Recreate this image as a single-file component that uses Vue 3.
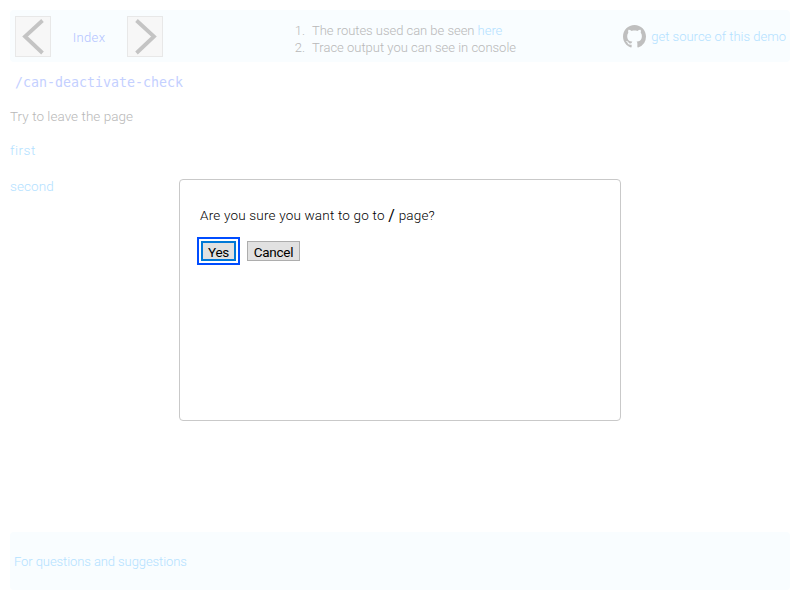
<script setup>
const notes = [
  { text: 'The routes used can be seen', link: 'here' },
  { text: 'Trace output you can see in console' }
]
const links = ['first', 'second']
</script>

<template>
  <div class="page">
    <header class="bar header">
      <nav class="nav">
        <button class="arrow" aria-label="Back">
          <svg width="34" height="39" viewBox="0 0 34 39"><path d="M26.5 3.5L9 19.5L26.5 36" /></svg>
        </button>
        <a class="index">Index</a>
        <button class="arrow" aria-label="Forward">
          <svg width="34" height="39" viewBox="0 0 34 39"><path d="M8.5 3.5L26 19.5L8.5 36" /></svg>
        </button>
      </nav>
      <ol class="notes">
        <li v-for="(note, i) in notes" :key="i">
          <span class="number">{{ i + 1 }}.</span>
          <span :class="{ linked: note.link }">{{ note.text }} <a v-if="note.link" class="link">{{ note.link }}</a></span>
        </li>
      </ol>
      <a class="source link">
        <svg class="github" width="23" height="23" viewBox="0 0 16 16"><path d="M8 0C3.58 0 0 3.58 0 8c0 3.54 2.29 6.53 5.47 7.59.4.07.55-.17.55-.38 0-.19-.01-.82-.01-1.49-2.01.37-2.53-.49-2.69-.94-.09-.23-.48-.94-.82-1.13-.28-.15-.68-.52-.01-.53.63-.01 1.08.58 1.23.82.72 1.21 1.87.87 2.33.66.07-.52.28-.87.51-1.07-1.78-.2-3.64-.89-3.64-3.95 0-.87.31-1.59.82-2.15-.08-.2-.36-1.02.08-2.12 0 0 .67-.21 2.2.82.64-.18 1.32-.27 2-.27s1.36.09 2 .27c1.53-1.04 2.2-.82 2.2-.82.44 1.1.16 1.92.08 2.12.51.56.82 1.27.82 2.15 0 3.07-1.87 3.75-3.65 3.95.29.25.54.73.54 1.48 0 1.07-.01 1.93-.01 2.2 0 .21.15.46.55.38A8.01 8.01 0 0 0 16 8c0-4.42-3.58-8-8-8z" /></svg>
        <span>get source of this demo</span>
      </a>
    </header>
    <main class="content">
      <div class="route">/can-deactivate-check</div>
      <p class="hint">Try to leave the page</p>
      <a v-for="link in links" :key="link" class="link entry" :class="link">{{ link }}</a>
    </main>
    <footer class="bar footer"><a class="link">For questions and suggestions</a></footer>
    <div class="overlay">
      <section class="dialog" role="dialog">
        <p class="question"><span>Are you sure you want to go to</span><b>/</b><span>page?</span></p>
        <div class="actions">
          <button class="action yes">Yes</button>
          <button class="action cancel">Cancel</button>
        </div>
      </section>
    </div>
  </div>
</template>

<style>
body { background: #fff; }
</style>

<style scoped>
* { box-sizing: border-box; }
.page {
  height: 600px;
  padding: 10px;
  display: flex;
  flex-direction: column;
  font: 300 14px/17px Roboto, sans-serif;
  color: #b8b8b8;
  white-space: nowrap;
}
.bar { background: #f9fdff; border-radius: 4px; display: flex; align-items: center; }
.header { height: 52px; padding: 0 4px 0 5px; }
.nav { display: flex; align-items: center; width: 148px; justify-content: space-between; }
.arrow { width: 36px; height: 41px; padding: 0; border: 1px solid #e8e8e8; background: #f7f7f7; }
.arrow svg { display: block; fill: none; stroke: #c4c4c4; stroke-width: 3.8; }
.index { padding-top: 2px; color: #b3c4ff; font-size: 13px; letter-spacing: 0.35px; }
.link { color: #b3e1ff; }
.notes { list-style: none; margin: 5px 0 0 130px; padding: 0; font-size: 13px; }
.notes li { display: flex; }
.linked { letter-spacing: -0.03px; }
.number { width: 12px; margin-right: 7px; text-align: right; }
.source { display: flex; align-items: center; gap: 5px; margin-left: auto; font-size: 13px; }
.github { fill: #bfbfbf; }
.content { flex: 1; display: flex; flex-direction: column; align-items: flex-start; }
.route { margin: 12px 0 0 5px; font: 13.3px/17px "DejaVu Sans Mono", monospace; color: #c4d0ff; }
.hint { margin: 17px 0; font-size: 13.5px; letter-spacing: 0.05px; }
.entry { margin-bottom: 19px; font-size: 13.5px; }
.first { letter-spacing: 0.5px; }
.second { letter-spacing: 0.1px; }
.footer { height: 58px; padding: 1px 4px 0; font-size: 13px; letter-spacing: -0.08px; }
.overlay { position: absolute; inset: 0; display: grid; place-items: center; height: 600px; }
.dialog { width: 442px; height: 242px; padding: 27px 20px; border: 1px solid #c9c9c9; border-radius: 4px; background: #fff; color: #000; }
.question { margin: 0; display: flex; font-size: 13.5px; letter-spacing: 0.19px; }
.question b { width: 14px; text-align: center; font: 400 16px/17px Roboto, sans-serif; }
.actions { display: flex; gap: 11px; margin: 17px 0 0 1px; }
.action { height: 20px; padding: 3px 0 0; border: 1px solid #adadad; background: #e1e1e1; color: #000; font: 400 13.5px/15px Roboto, sans-serif; letter-spacing: -0.25px; }
.yes { width: 35px; border: 2px solid #0078d7; outline: 2px solid #004cff; outline-offset: 2px; padding: 2px 0 0; line-height: 14px; }
.cancel { width: 53px; }
</style>
